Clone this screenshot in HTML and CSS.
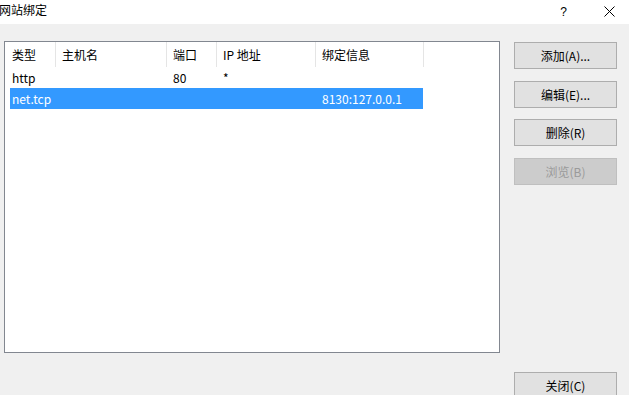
FILE: index.html
```html
<!DOCTYPE html>
<html lang="zh-CN">
<head>
  <meta charset="UTF-8" />
  <title>网站绑定</title>
  <link rel="stylesheet" href="styles.css">
</head>
<body>
  <div class="titlebar">
    <span class="title">网站绑定</span>
    <div class="controls">
      <span class="help">?</span>
      <svg class="close-x" width="11" height="11" viewBox="0 0 11 11">
        <path d="M0.5 0.5 L10.5 10.5 M10.5 0.5 L0.5 10.5" stroke="#000" stroke-width="1" fill="none"/>
      </svg>
    </div>
  </div>

  <div class="content">
    <div class="list">
      <div class="list-head">
        <div class="col">类型</div>
        <div class="col">主机名</div>
        <div class="col">端口</div>
        <div class="col">IP 地址</div>
        <div class="col">绑定信息</div>
      </div>
      <div class="row">
        <div class="cell">http</div>
        <div class="cell"></div>
        <div class="cell">80</div>
        <div class="cell">*</div>
        <div class="cell"></div>
      </div>
      <div class="row selected">
        <div class="cell">net.tcp</div>
        <div class="cell"></div>
        <div class="cell"></div>
        <div class="cell"></div>
        <div class="cell">8130:127.0.0.1</div>
      </div>
    </div>

    <div class="actions">
      <button class="btn">添加(A)...</button>
      <button class="btn">编辑(E)...</button>
      <button class="btn">删除(R)</button>
      <button class="btn" disabled>浏览(B)</button>
    </div>
  </div>

  <div class="footer">
    <button class="btn">关闭(C)</button>
  </div>
</body>
</html>
```

FILE: styles.css
```css
body {
  margin: 0;
  background: #f0f0f0;
  font-family: "Microsoft YaHei UI", "Noto Sans CJK SC", "Noto Sans", sans-serif;
  font-size: 12px;
  color: #000;
  overflow: hidden;
}

.titlebar {
  height: 24px;
  background: #fff;
  display: flex;
  align-items: center;
}

.title {
  margin-left: -1px;
  line-height: 16px;
  margin-top: -4px;
}

.controls {
  margin-left: auto;
  display: flex;
  align-items: center;
  margin-top: -1px;
}

.help {
  font-family: "Liberation Sans", sans-serif;
  font-size: 12px;
  margin-right: 37px;
}

.close-x {
  margin-right: 14px;
  display: block;
}

.content {
  display: flex;
  padding: 17px 0 0 4px;
}

.list {
  width: 494px;
  height: 310px;
  background: #fff;
  border: 1px solid #828790;
}

.list-head {
  display: grid;
  grid-template-columns: 51px 111px 50px 99px 108px;
  height: 25px;
}

.list-head .col {
  border-right: 1px solid #e5e5e5;
  padding-left: 6px;
  line-height: 25px;
  white-space: nowrap;
}

.list-head .col:first-child {
  padding-left: 7px;
}

.row {
  display: grid;
  grid-template-columns: 46px 111px 50px 99px 107px;
  height: 21px;
  line-height: 21px;
  margin-left: 5px;
  width: 413px;
}

.row .cell {
  padding-left: 6px;
  white-space: nowrap;
}

.row .cell:first-child {
  padding-left: 2px;
}

.row.selected {
  background: #3399ff;
  color: #fff;
}

.actions {
  display: flex;
  flex-direction: column;
  gap: 11.5px;
  margin-left: 14px;
  padding-top: 1px;
}

.btn {
  width: 103px;
  height: 27px;
  background: #e1e1e1;
  border: 1px solid #adadad;
  border-radius: 0;
  font-family: inherit;
  font-size: 12px;
  color: #000;
  padding: 0;
}

.btn:disabled {
  background: #cccccc;
  border-color: #bfbfbf;
  color: #9a9a9a;
}

.footer {
  padding: 19px 0 0 514px;
}
```
